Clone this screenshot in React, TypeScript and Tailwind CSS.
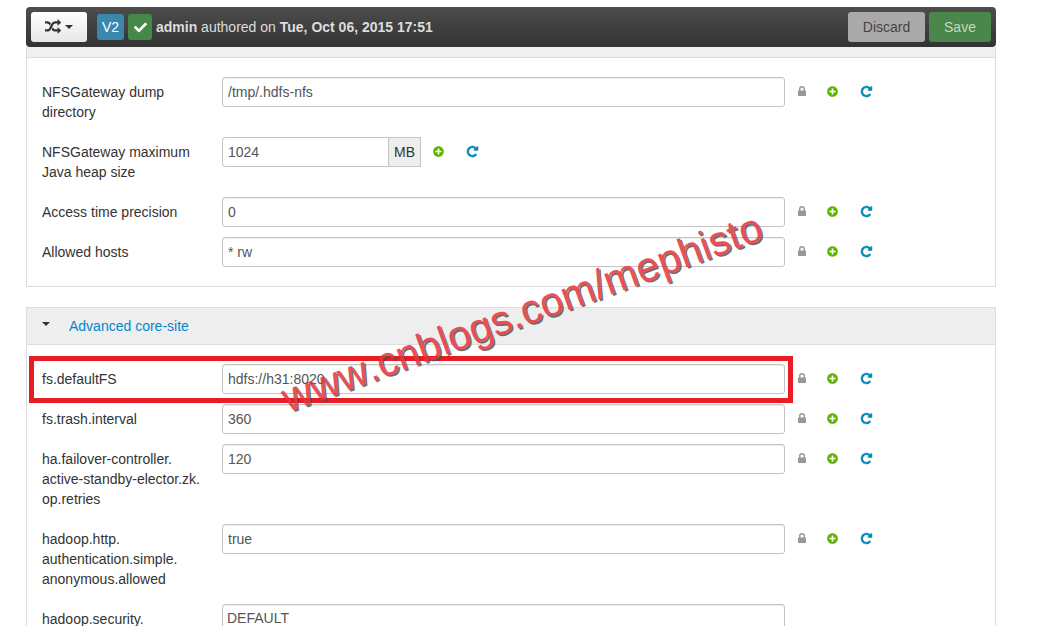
import { ReactNode } from "react";
import { FaCheck, FaPlusCircle } from "react-icons/fa";

interface ConfigRowProps {
  id: string;
  label: string[];
  value: string;
  unit?: string;
  multiline?: boolean;
  highlighted?: boolean;
}

const generalSettings: ConfigRowProps[] = [
  {
    id: "nfsgateway-dump-dir",
    label: ["NFSGateway dump", "directory"],
    value: "/tmp/.hdfs-nfs",
  },
  {
    id: "nfsgateway-heapsize",
    label: ["NFSGateway maximum", "Java heap size"],
    value: "1024",
    unit: "MB",
  },
  { id: "access-time-precision", label: ["Access time precision"], value: "0" },
  { id: "allowed-hosts", label: ["Allowed hosts"], value: "* rw" },
];

const coreSiteSettings: ConfigRowProps[] = [
  {
    id: "fs-default-fs",
    label: ["fs.defaultFS"],
    value: "hdfs://h31:8020",
    highlighted: true,
  },
  { id: "fs-trash-interval", label: ["fs.trash.interval"], value: "360" },
  {
    id: "ha-failover-retries",
    label: ["ha.failover-controller.", "active-standby-elector.zk.", "op.retries"],
    value: "120",
  },
  {
    id: "hadoop-http-anonymous",
    label: ["hadoop.http.", "authentication.simple.", "anonymous.allowed"],
    value: "true",
  },
  {
    id: "hadoop-security",
    label: ["hadoop.security."],
    value: "DEFAULT",
    multiline: true,
  },
];

function ShuffleIcon() {
  return (
    <svg viewBox="0 0 1792 1792" className="h-4 w-4" fill="currentColor" aria-hidden="true">
      <path d="M666 481q-60 92-137 273-22-45-37-72.5t-40.5-63.5-51-56.5-63-35-81.5-14.5h-224q-14 0-23-9t-9-23v-192q0-14 9-23t23-9h224q250 0 410 225zm1126 799q0 14-9 23l-320 320q-9 9-23 9-13 0-22.5-9.5t-9.5-22.5v-192q-32 0-85 .5t-81 1-73-1-71-5-64-10.5-63-18.5-58-28.5-59-40-55-53.5-56-69.5q59-93 136-273 22 45 37 72.5t40.5 63.5 51 56.5 63 35 81.5 14.5h256v-192q0-14 9-23t23-9q12 0 24 10l319 319q9 9 9 23zm0-896q0 14-9 23l-320 320q-9 9-23 9-13 0-22.5-9.5t-9.5-22.5v-192h-256q-48 0-87 15t-69 45-51 61.5-45 77.5q-32 62-78 171-29 66-49.5 111t-54 105-64 100-74 83-90 68.5-106.5 42-128 16.5h-224q-14 0-23-9t-9-23v-192q0-14 9-23t23-9h224q48 0 87-15t69-45 51-61.5 45-77.5q32-62 78-171 29-66 49.5-111t54-105 64-100 74-83 90-68.5 106.5-42 128-16.5h256v-192q0-14 9-23t23-9q12 0 24 10l319 319q9 9 9 23z" />
    </svg>
  );
}

function LockIcon() {
  return (
    <svg viewBox="0 0 8 10" className="h-2.5 w-2" fill="currentColor" aria-hidden="true">
      <path d="M0 5.200Q0 4.500 .6 4.500H1V3a3 3 0 0 1 6 0v1.500h.4q.6 0 .6 .7v4.100q0 .7-.6 .7H.6Q0 10 0 9.300zM2.500 4.500h3V3a1.500 1.500 0 0 0-3 0z" />
    </svg>
  );
}

function RepeatIcon() {
  return (
    <svg viewBox="0 0 1536 1536" className="h-[11px] w-[11px]" fill="currentColor" stroke="currentColor" strokeWidth="70" overflow="visible" aria-hidden="true">
      <path d="M1536 128v448q0 26-19 45t-45 19h-448q-42 0-59-40-17-39 14-69l138-138q-148-137-349-137-104 0-198.5 40.5t-163.5 109.5-109.5 163.5-40.5 198.5 40.5 198.5 109.5 163.5 163.5 109.5 198.5 40.5q119 0 225-52t179-147q7-10 23-12 15 0 25 9l137 138q9 8 9.5 20.5t-7.5 22.5q-109 132-264 204.5t-327 72.5q-156 0-298-61t-245-164-164-245-61-298 61-298 164-245 245-164 298-61q147 0 284.5 55.5t244.5 156.5l130-129q29-31 70-14 39 17 39 59z" />
    </svg>
  );
}

function Caret() {
  return (
    <svg viewBox="0 0 8 4" className="h-1 w-2" fill="currentColor" aria-hidden="true">
      <path d="M0 0h8L4 4z" />
    </svg>
  );
}

function IconButton({ label, className, children }: { label: string; className: string; children: ReactNode }) {
  return (
    <button
      type="button"
      aria-label={label}
      className={`flex h-7 w-3.5 shrink-0 items-center justify-center ${className}`}
    >
      {children}
    </button>
  );
}

function ConfigRow({ id, label, value, unit, multiline, highlighted }: ConfigRowProps) {
  return (
    <div className="relative mb-2.5 flex items-start">
      <label htmlFor={id} className="w-[180px] shrink-0 py-[5px]">
        {label.map((line) => (
          <span key={line} className="block">
            {line}
          </span>
        ))}
      </label>

      {/* Field */}
      {unit ? (
        <div className="flex">
          <input
            id={id}
            defaultValue={value}
            className="h-[30px] w-[167px] rounded-l-[3px] border border-[#c4c4c4] bg-white px-[5px] text-[#555]"
          />
          <span className="flex h-[30px] w-8 items-center justify-center border border-l-0 border-[#c4c4c4] bg-[#eee]">
            {unit}
          </span>
        </div>
      ) : multiline ? (
        <textarea
          id={id}
          defaultValue={value}
          className="h-20 min-w-0 flex-1 resize-none rounded-[3px] border border-[#c4c4c4] bg-white px-1 py-[3px] text-[#555] shadow-[inset_0_1px_1px_#00000013]"
        />
      ) : (
        <input
          id={id}
          defaultValue={value}
          className="h-[30px] min-w-0 flex-1 rounded-[3px] border border-[#c4c4c4] bg-white px-[5px] text-[#555] shadow-[inset_0_1px_1px_#00000013]"
        />
      )}

      {/* Actions, sitting at the foot of a multiline field */}
      <div className={`flex w-[195px] shrink-0 pl-2.5 ${multiline ? "self-end" : ""}`}>
        {!unit && (
          <IconButton label="Final" className="mr-4 text-[#999]">
            <LockIcon />
          </IconButton>
        )}
        <IconButton label="Override" className="mr-5 text-[#5ab400]">
          <FaPlusCircle size={11} />
        </IconButton>
        <IconButton label="Set recommended" className="text-[#0088b8]">
          <RepeatIcon />
        </IconButton>
      </div>

      {highlighted && (
        <div className="pointer-events-none absolute -top-2 right-[187px] -bottom-[9px] -left-[13px] border-5 border-[#e81c24]" />
      )}
    </div>
  );
}

export default function App() {
  return (
    <div className="relative h-screen overflow-hidden bg-white pt-[7px] pr-[45px] pl-[26px] font-['Liberation_Sans',Arial,sans-serif] text-sm leading-5 text-[#333]">
      {/* Version bar */}
      <header className="flex h-10 items-center rounded-[4px] bg-linear-to-b from-[#4d4d4d] to-[#333] px-[5px] text-[#ddd]">
        <button
          type="button"
          aria-label="Compare versions"
          className="flex h-[30px] w-14 items-center justify-center gap-1 rounded-[3px] bg-linear-to-b from-white to-[#e6e6e6] text-[#333]"
        >
          <ShuffleIcon />
          <Caret />
        </button>
        <span className="ml-2.5 flex h-[26px] w-[27px] items-center justify-center rounded-[3px] bg-[#3a87ad] text-white">
          V2
        </span>
        <span className="ml-1 flex h-[26px] w-6 items-center justify-center rounded-[3px] bg-[#468847] text-white">
          <FaCheck size={13} />
        </span>
        <p className="ml-1">
          <strong>admin</strong> authored on <strong>Tue, Oct 06, 2015 17:51</strong>
        </p>
        <div className="ml-auto flex gap-1">
          <button type="button" className="h-[30px] w-[77px] rounded-[3px] bg-[#a9a9a9] text-[#444]">
            Discard
          </button>
          <button type="button" className="h-[30px] w-[62px] rounded-[3px] bg-[#4a874a] text-[#c4d6c4]">
            Save
          </button>
        </div>
      </header>

      <main>
        {/* General */}
        <section className="border border-t-0 border-[#ddd]">
          <div className="h-[11px] border-b border-[#ddd] bg-[#f0f0f0]" />
          <div className="px-[15px] pt-[19px] pb-[9px]">
            {generalSettings.map((setting) => (
              <ConfigRow key={setting.id} {...setting} />
            ))}
          </div>
        </section>

        {/* Advanced core-site */}
        <section className="mt-5 border border-[#ddd]">
          <h2 className="flex h-[37px] items-center border-b border-[#ddd] bg-[#eee] pl-[15px]">
            <span className="mb-1 w-[27px]">
              <Caret />
            </span>
            <a href="#core-site" className="text-[#0088cc]">
              Advanced core-site
            </a>
          </h2>
          <div className="px-[15px] pt-[19px] pb-[9px]">
            {coreSiteSettings.map((setting) => (
              <ConfigRow key={setting.id} {...setting} />
            ))}
          </div>
        </section>
      </main>

      {/* Watermark */}
      <div className="pointer-events-none absolute top-[378px] left-[290px] origin-bottom-left -rotate-20 text-[41px] leading-10 whitespace-nowrap text-[#e8323a] opacity-85 [font-kerning:none] [text-shadow:1px_2px_0_#555]">
        www.cnblogs.com/mephisto
      </div>
    </div>
  );
}
